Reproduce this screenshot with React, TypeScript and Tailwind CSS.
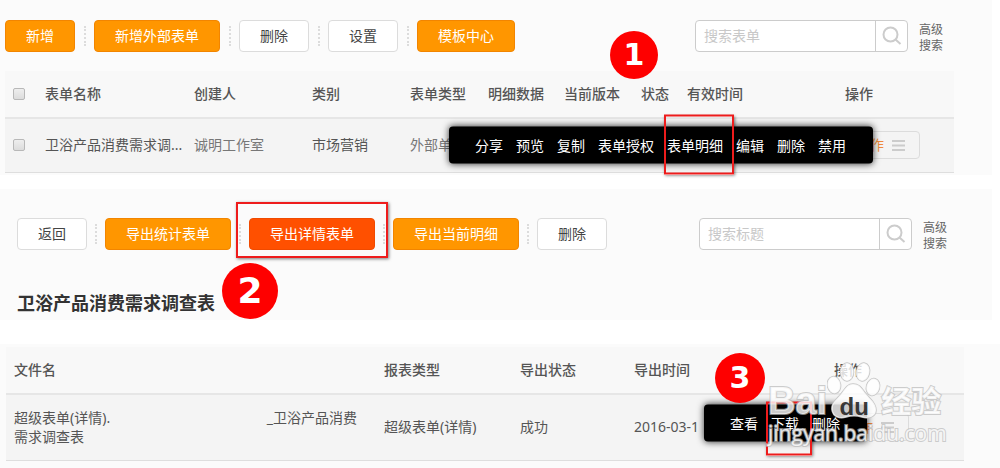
import type { ReactNode } from 'react';

const formMenu = ['分享', '预览', '复制', '表单授权', '表单明细', '编辑', '删除', '禁用'];
const exportMenu = ['查看', '下载', '删除'];

const tones = {
    plain: 'bg-white border-[#dcdcdc] text-[#444]',
    orange: 'bg-[#ff9600] border-[#f28500] text-white',
    red: 'bg-[#ff5000] border-[#f04a00] text-white',
};

function ToolButton({ tone, children }: { tone: keyof typeof tones; children: ReactNode }) {
    return (
        <button className={`h-8 shrink-0 rounded border px-5 text-sm leading-5 ${tones[tone]}`}>
            {children}
        </button>
    );
}

function Dots({ wide = false }: { wide?: boolean }) {
    return (
        <span className={`flex shrink-0 justify-center ${wide ? 'w-[19px]' : 'w-[18px]'}`}>
            <span className="h-5 border-l-2 border-dotted border-[#dcdcdc]" />
        </span>
    );
}

function SearchBox({ placeholder }: { placeholder: string }) {
    return (
        <div className="ml-auto flex shrink-0 items-center gap-[11px]">
            <div className="flex h-8 w-[213px] rounded-sm border border-[#ccc] bg-white">
                <input
                    type="text"
                    aria-label={placeholder}
                    placeholder={placeholder}
                    className="min-w-0 flex-1 bg-transparent px-2 text-sm outline-none placeholder:text-[#c8c8c8]"
                />
                <button aria-label="搜索" className="flex w-8 items-center justify-center border-l border-[#ccc]">
                    <svg width="20" height="20" viewBox="0 0 20 20" fill="none" stroke="#ccc" strokeWidth="2">
                        <circle cx="8.5" cy="8.5" r="7" />
                        <path d="M13.5 13.5l5 4.5" />
                    </svg>
                </button>
            </div>
            <a href="#" className="w-6 pt-1 text-xs leading-4 text-[#666]">
                高级搜索
            </a>
        </div>
    );
}

function ActionMenu({ items, marked, children }: { items: string[]; marked: string; children: ReactNode }) {
    return (
        <div className="absolute top-1/2 right-full flex h-[37px] -translate-y-1/2 items-center gap-[13px] rounded bg-black pr-[27px] pl-[26px] text-sm whitespace-nowrap text-white shadow-[0_0_7px_rgba(0,0,0,0.8)]">
            {items.map((item) => (
                <button key={item} className="relative leading-5">
                    {item}
                    {item === marked && children}
                </button>
            ))}
        </div>
    );
}

function ActionCell({ children }: { children: ReactNode }) {
    return (
        <div className="relative flex h-7 w-[75px] items-center rounded border border-[#dcdcdc]">
            <button className="flex flex-1 items-center gap-2 pl-2.5 text-sm text-[#f08a3c]">
                操作
                <svg width="13" height="11" viewBox="0 0 13 11" stroke="#ccc" strokeWidth="2">
                    <path d="M0 1h13M0 5.5h13M0 10h13" />
                </svg>
            </button>
            {children}
        </div>
    );
}

function Checkbox({ label }: { label: string }) {
    return (
        <input
            type="checkbox"
            aria-label={label}
            className="block size-3 appearance-none rounded-xs border border-[#b8b8b8] bg-linear-to-b from-[#eee] to-[#dcdcdc]"
        />
    );
}

const markBox = 'pointer-events-none absolute border-2 border-[#ee1c1c] shadow-[1px_1px_3px_rgba(0,0,0,0.5)]';
const stepBadge =
    "absolute flex items-center justify-center rounded-full bg-[#fe0000] font-['DejaVu_Sans'] font-bold text-white";

function Watermark() {
    return (
        <div className="pointer-events-none absolute top-4 right-[54px] w-[178px] text-white/80 [paint-order:stroke] [-webkit-text-stroke:2px_rgba(185,185,185,0.7)]">
            <div className="flex h-[59px] items-end">
                <span className="font-['Liberation_Sans'] text-[38px] leading-9 font-bold">Bai</span>
                <div className="relative h-[58px] w-[54px] shrink-0">
                    <svg
                        width="54"
                        height="58"
                        viewBox="0 0 54 58"
                        fill="#fff"
                        fillOpacity="0.8"
                        stroke="#c4c4c4"
                        strokeWidth="1.5"
                    >
                        <ellipse cx="7" cy="24" rx="6.5" ry="8.5" transform="rotate(-10 7 24)" />
                        <ellipse cx="20" cy="11" rx="6.5" ry="9" />
                        <ellipse cx="36" cy="11" rx="6.5" ry="9" transform="rotate(12 36 11)" />
                        <ellipse cx="46" cy="26" rx="6.5" ry="8.5" transform="rotate(15 46 26)" />
                        <path d="M26 23c-6 0-8 5-12 10S4 42 5 49s8 9 14 7 10-2 16 0 14 0 14-7-6-11-10-16-6-10-13-10z" />
                    </svg>
                    <span className="absolute inset-x-0 bottom-0 text-center font-['Liberation_Sans'] text-2xl leading-6 font-bold text-[#222]/90 [-webkit-text-stroke:0]">
                        du
                    </span>
                </div>
                <span className="text-[30px] leading-9 font-bold whitespace-nowrap">经验</span>
            </div>
            <div className="font-['Open_Sans'] text-[21px] leading-7 font-medium whitespace-nowrap">
                jingyan.baidu.com
            </div>
        </div>
    );
}

export default function App() {
    return (
        <div className="bg-white font-['Noto_Sans','Noto_Sans_CJK_SC',sans-serif] text-sm leading-5 text-[#555]">
            {/* Form list */}
            <section className="relative mr-2 bg-[#fbfbfb] pb-[2px]">
                <div className="flex h-[71px] items-center pr-[49px] pl-[5px]">
                    <ToolButton tone="orange">新增</ToolButton>
                    <Dots wide />
                    <ToolButton tone="orange">新增外部表单</ToolButton>
                    <Dots wide />
                    <ToolButton tone="plain">删除</ToolButton>
                    <Dots wide />
                    <ToolButton tone="plain">设置</ToolButton>
                    <Dots wide />
                    <ToolButton tone="orange">模板中心</ToolButton>
                    <SearchBox placeholder="搜索表单" />
                </div>
                <div className="pr-[38px] pl-[5px]">
                    <table className="w-full table-fixed text-left whitespace-nowrap">
                        <thead>
                            <tr className="h-[47px] border-b-2 border-[#e6e6e6] bg-[#f8f8f8] [&>th]:font-medium">
                                <th className="w-10 pl-2">
                                    <Checkbox label="全选" />
                                </th>
                                <th className="w-[149px]">表单名称</th>
                                <th className="w-[118px]">创建人</th>
                                <th className="w-[98px]">类别</th>
                                <th className="w-[78px]">表单类型</th>
                                <th className="w-[76px]">明细数据</th>
                                <th className="w-[77px]">当前版本</th>
                                <th className="w-[46px]">状态</th>
                                <th className="w-[158px]">有效时间</th>
                                <th>操作</th>
                            </tr>
                        </thead>
                        <tbody>
                            <tr className="h-[54px] border-b border-[#dedede] bg-[#f4f4f4]">
                                <td className="pl-2">
                                    <Checkbox label="选择表单" />
                                </td>
                                <td>卫浴产品消费需求调...</td>
                                <td className="text-[#777]">诚明工作室</td>
                                <td>市场营销</td>
                                <td className="text-[#777]">外部单</td>
                                <td />
                                <td />
                                <td />
                                <td />
                                <td>
                                    <ActionCell>
                                        <div className="absolute inset-y-0 left-[27px]">
                                            <ActionMenu items={formMenu} marked="表单明细">
                                                <span className={`${markBox} -top-[21px] -left-[3px] h-[60px] w-[70px]`} />
                                            </ActionMenu>
                                        </div>
                                    </ActionCell>
                                </td>
                            </tr>
                        </tbody>
                    </table>
                </div>
                <span className={`${stepBadge} top-[31px] left-[610px] size-12 text-3xl`}>1</span>
            </section>

            {/* Export toolbar */}
            <section className="relative mt-[14px] mr-2 h-[131px] bg-[#fbfbfb]">
                <div className="flex h-[90px] items-center pr-[45px] pl-[17px]">
                    <ToolButton tone="plain">返回</ToolButton>
                    <Dots />
                    <ToolButton tone="orange">导出统计表单</ToolButton>
                    <Dots />
                    <div className="relative flex">
                        <ToolButton tone="red">导出详情表单</ToolButton>
                        <span className={`${markBox} -top-4 -left-[13px] h-14 w-[152px]`} />
                    </div>
                    <Dots />
                    <ToolButton tone="orange">导出当前明细</ToolButton>
                    <Dots />
                    <ToolButton tone="plain">删除</ToolButton>
                    <SearchBox placeholder="搜索标题" />
                </div>
                <h2 className="pt-2.5 pl-[17px] text-lg leading-7 font-bold text-[#333]">卫浴产品消费需求调查表</h2>
                <span className={`${stepBadge} top-[74px] left-[222px] size-14 text-4xl`}>2</span>
            </section>

            {/* Exported files */}
            <section className="relative mt-6 bg-[#fbfbfb] pt-[3px] pr-9 pb-[7px] pl-[6px]">
                <table className="w-full table-fixed text-left whitespace-nowrap">
                    <thead>
                        <tr className="h-[47px] border-b-2 border-[#e6e6e6] bg-[#f8f8f8] [&>th]:font-medium">
                            <th className="w-[378px] pl-2">文件名</th>
                            <th className="w-[136px]">报表类型</th>
                            <th className="w-[114px]">导出状态</th>
                            <th className="w-[200px]">导出时间</th>
                            <th>操作</th>
                        </tr>
                    </thead>
                    <tbody>
                        <tr className="h-[67px] border-b border-[#dedede] bg-[#f4f4f4]">
                            <td className="pl-2 leading-[19px]">
                                <div className="flex w-[343px] justify-between">
                                    <span>超级表单(详情).</span>
                                    <span>_卫浴产品消费</span>
                                </div>
                                需求调查表
                            </td>
                            <td>超级表单(详情)</td>
                            <td>成功</td>
                            <td>2016-03-1</td>
                            <td>
                                <ActionCell>
                                    <div className="absolute top-0 bottom-2 left-8">
                                        <ActionMenu items={exportMenu} marked="下载">
                                            <span className={`${markBox} -top-3 -left-[5px] h-[54px] w-[46px]`} />
                                        </ActionMenu>
                                    </div>
                                </ActionCell>
                            </td>
                        </tr>
                    </tbody>
                </table>
                <span className={`${stepBadge} top-[9px] left-[715px] size-[50px] text-3xl`}>3</span>
                <Watermark />
            </section>
        </div>
    );
}
